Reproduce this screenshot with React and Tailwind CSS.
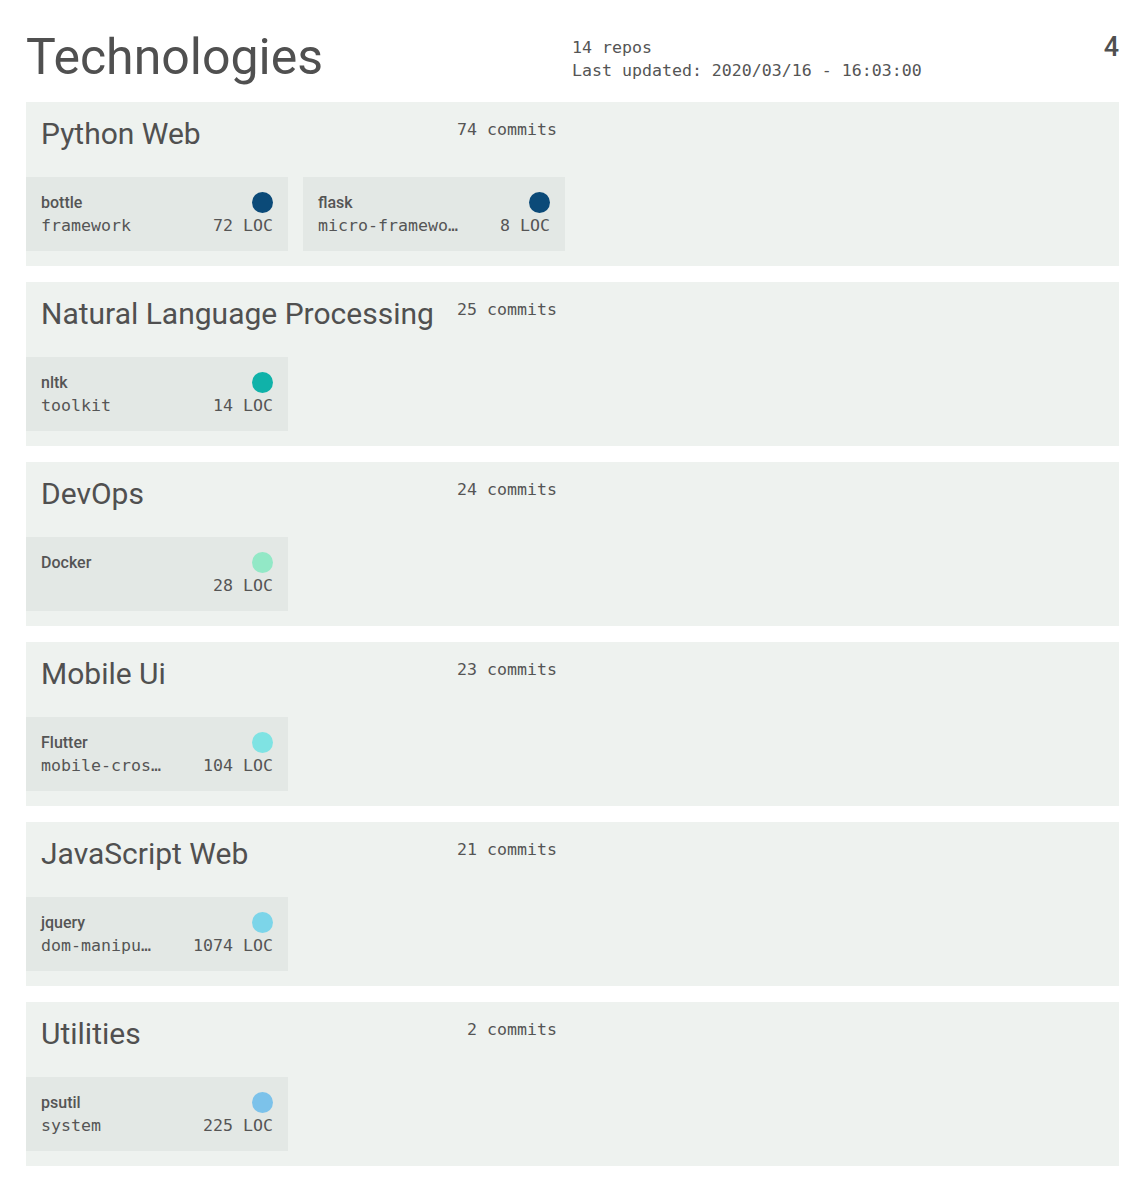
import React from 'react';

const mono = { fontFamily: '"DejaVu Sans Mono", "Liberation Mono", monospace' };

const groups = [
    {
        name: 'Python Web',
        commits: 74,
        libs: [
            { name: 'bottle', kind: 'framework', loc: 72, color: 'bg-[#0b4a78]' },
            { name: 'flask', kind: 'micro-framework', loc: 8, color: 'bg-[#0b4a78]' },
        ],
    },
    {
        name: 'Natural Language Processing',
        commits: 25,
        libs: [{ name: 'nltk', kind: 'toolkit', loc: 14, color: 'bg-[#10b2a9]' }],
    },
    {
        name: 'DevOps',
        commits: 24,
        libs: [{ name: 'Docker', kind: '', loc: 28, color: 'bg-[#92e8c6]' }],
    },
    {
        name: 'Mobile Ui',
        commits: 23,
        libs: [{ name: 'Flutter', kind: 'mobile-cross-platform', loc: 104, color: 'bg-[#7fe3e3]' }],
    },
    {
        name: 'JavaScript Web',
        commits: 21,
        libs: [{ name: 'jquery', kind: 'dom-manipulation', loc: 1074, color: 'bg-[#7cd5e9]' }],
    },
    {
        name: 'Utilities',
        commits: 2,
        libs: [{ name: 'psutil', kind: 'system', loc: 225, color: 'bg-[#7cc2ea]' }],
    },
];

const LibCard = ({ lib }) => (
    <div className="w-[262px] h-[74px] bg-[#e3e8e5] px-[15px] pt-[15px]">
        <div className="flex justify-between items-start">
            <span className="text-[16px] font-medium leading-[20px] mt-[1px] text-[#555]">{lib.name}</span>
            <span className={`w-[21px] h-[21px] rounded-full ${lib.color}`}></span>
        </div>
        <div className="flex items-center text-[16.6px] leading-[20px] mt-[3px] text-[#555]" style={mono}>
            <span className="flex-1 min-w-0 truncate pr-1">{lib.kind}</span>
            <span className="ml-9 whitespace-pre">{lib.loc} LOC</span>
        </div>
    </div>
);

export default function App() {
    return (
        <div className="min-h-screen bg-white text-[#505050] pl-[26px] pr-[16px] pt-[28px] pb-[14px]" style={{ fontFamily: 'Roboto, "Noto Sans", sans-serif' }}>
            {/* Cabecera */}
            <div className="flex items-start h-[74px]">
                <h1 className="text-[50px] leading-[58px] w-[546px]">Technologies</h1>
                <div className="flex-1 text-[16.6px] leading-[23px] pt-[8px] text-[#555]" style={mono}>
                    <div>14 repos</div>
                    <div>Last updated: 2020/03/16 - 16:03:00</div>
                </div>
                <div className="text-[27px] leading-[30px] pt-[4px] font-medium">4</div>
            </div>

            <div className="flex flex-col gap-[16px]">
                {groups.map((g) => (
                    <div key={g.name} className="bg-[#eef2ef] h-[164px] pb-[15px]">
                        <div className="flex justify-between items-start w-[531px] pl-[15px] pt-[13px] h-[75px]">
                            <h2 className="text-[30px] leading-[38px]">{g.name}</h2>
                            <span className="text-[16.6px] leading-[24px] pt-[3px] text-[#555]" style={mono}>{g.commits} commits</span>
                        </div>
                        <div className="flex gap-[15px]">
                            {g.libs.map((lib) => (
                                <LibCard key={lib.name} lib={lib} />
                            ))}
                        </div>
                    </div>
                ))}
            </div>
        </div>
    );
}
